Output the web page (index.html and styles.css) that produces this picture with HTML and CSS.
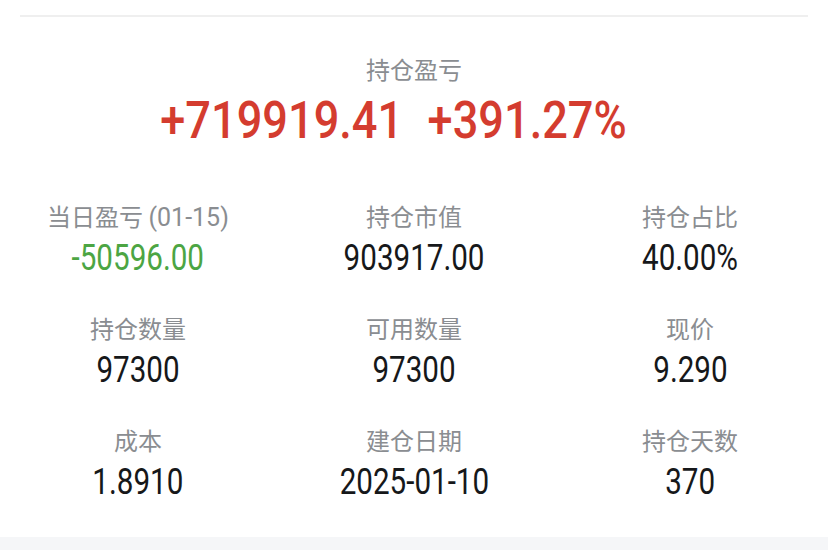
FILE: index.html
```html
<!DOCTYPE html>
<html>

<head>
    <title>持仓详情</title>
    <meta name="viewport" content="width=device-width, initial-scale=1">
    <link rel="stylesheet" href="styles.css">
</head>

<body>
    <div class="card">
        <div class="divider"></div>

        <div class="summary">
            <div class="summary-title">持仓盈亏</div>
            <div class="summary-value">
                <span class="num">+719919.41 +391.27%</span>
            </div>
        </div>

        <div class="stats">
            <div class="stat">
                <div class="stat-label">当日盈亏 <span class="stat-date">(01-15)</span></div>
                <div class="stat-value down"><span class="num">-50596.00</span></div>
            </div>
            <div class="stat">
                <div class="stat-label">持仓市值</div>
                <div class="stat-value"><span class="num">903917.00</span></div>
            </div>
            <div class="stat">
                <div class="stat-label">持仓占比</div>
                <div class="stat-value"><span class="num">40.00%</span></div>
            </div>

            <div class="stat">
                <div class="stat-label">持仓数量</div>
                <div class="stat-value"><span class="num">97300</span></div>
            </div>
            <div class="stat">
                <div class="stat-label">可用数量</div>
                <div class="stat-value"><span class="num">97300</span></div>
            </div>
            <div class="stat">
                <div class="stat-label">现价</div>
                <div class="stat-value"><span class="num">9.290</span></div>
            </div>

            <div class="stat">
                <div class="stat-label">成本</div>
                <div class="stat-value"><span class="num">1.8910</span></div>
            </div>
            <div class="stat">
                <div class="stat-label">建仓日期</div>
                <div class="stat-value"><span class="num">2025-01-10</span></div>
            </div>
            <div class="stat">
                <div class="stat-label">持仓天数</div>
                <div class="stat-value"><span class="num">370</span></div>
            </div>
        </div>
    </div>
</body>

</html>
```

FILE: styles.css
```css
body {
    margin: 0;
    padding: 0;
    background-color: #f5f6f8;
    font-family: "Noto Sans CJK SC", "Noto Sans", sans-serif;
}

.card {
    background-color: #fff;
    padding: 15px 0 0;
    height: 522px;
}

.divider {
    height: 2px;
    margin: 0 20px;
    background-color: #efefef;
}

/* digits in the reference are a narrow DIN-like face */
.num {
    display: inline-block;
    vertical-align: top;
    font-family: Roboto, "Liberation Sans", sans-serif;
    transform: scaleX(0.8);
}

.summary {
    padding-top: 35px;
    text-align: center;
}

.summary-title {
    font-size: 24px;
    line-height: 34px;
    color: #8a8d91;
}

.summary-value {
    font-family: Roboto, "Liberation Sans", sans-serif;
    font-size: 51px;
    line-height: 60px;
    font-weight: 500;
    color: #d43c2f;
    padding-top: 5px;
}

.summary-value .num {
    margin-right: 40px;
    word-spacing: 15px;
    transform: scaleX(0.885);
}

.stats {
    display: grid;
    grid-template-columns: repeat(3, 1fr);
    row-gap: 31px;
    margin-top: 48px;
    text-align: center;
}

.stat-label {
    font-size: 24px;
    line-height: 34px;
    color: #8a8d91;
}

.stat-date {
    font-family: Roboto, "Liberation Sans", sans-serif;
    font-size: 25px;
    line-height: 1;
}

.stat-value {
    margin-top: 3px;
    font-family: Roboto, "Liberation Sans", sans-serif;
    font-size: 37px;
    line-height: 44px;
    color: #16181a;
}

.stat-value.down {
    color: #4ca543;
}
```
